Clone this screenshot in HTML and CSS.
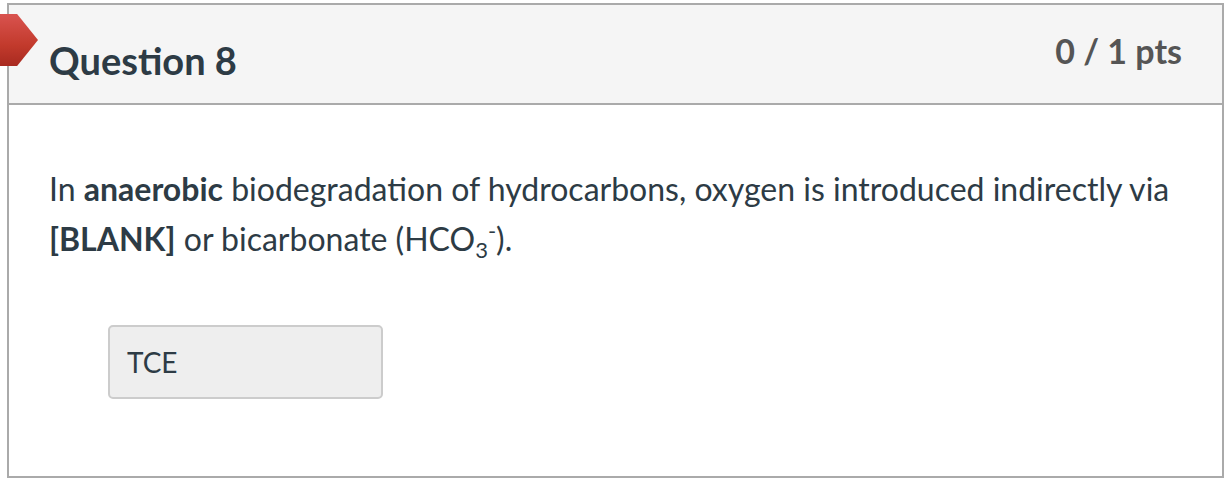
FILE: index.html
```html
<!DOCTYPE html>
<html>
<head>
<meta charset="utf-8">
<link rel="stylesheet" href="styles.css">
</head>
<body>
<div class="marker"></div>
<div class="question">
  <div class="header">
    <h2 class="title">Question 8</h2>
    <div class="pts">0 / 1 pts</div>
  </div>
  <div class="content">
    <p class="text">In <strong>anaerobic</strong> biodegradation of hydrocarbons, oxygen is introduced indirectly via <strong>[BLANK]</strong> or bicarbonate (HCO<sub>3</sub><sup>-</sup>).</p>
    <div class="answer">TCE</div>
  </div>
</div>
</body>
</html>
```
FILE: styles.css
```css
html, body {
  margin: 0;
  padding: 0;
  background: #ffffff;
}
body {
  font-family: Lato, "Noto Sans", sans-serif;
  color: #2d3b45;
  width: 1228px;
  height: 484px;
  overflow: hidden;
  position: relative;
}
.question {
  margin: 3px 4px 0 7px;
  height: 471px;
  border: 2px solid #aaaaaa;
  box-sizing: content-box;
}
.header {
  background: #f5f5f5;
  height: 98px;
  border-bottom: 2px solid #aaaaaa;
  display: flex;
  justify-content: space-between;
  align-items: flex-start;
  padding: 0 40px 0 40px;
}
.title {
  margin: 32px 0 0 0;
  font-size: 38px;
  font-weight: 700;
  line-height: 46px;
  color: #2d3b45;
}
.pts {
  margin-top: 26px;
  font-size: 34px;
  font-weight: 700;
  line-height: 40px;
  color: #555555;
}
.content {
  padding: 59px 40px 0 40px;
}
.text {
  margin: 0;
  font-size: 32px;
  line-height: 50px;
  color: #2d3b45;
}
.text strong {
  font-weight: 700;
}
.text sub, .text sup {
  font-size: 22px;
  line-height: 0;
}
.answer {
  margin: 61px 0 0 59px;
  width: 271px;
  height: 70px;
  border: 2px solid #cccccc;
  border-radius: 5px;
  background: #eeeeee;
  box-sizing: content-box;
  font-size: 28px;
  line-height: 70px;
  text-indent: 17px;
  color: #2d3b45;
}
.marker {
  position: absolute;
  left: 0;
  top: 14px;
  width: 38px;
  height: 52px;
  background: linear-gradient(180deg, #d9534f 0%, #c23a2c 60%, #a82a20 100%);
  clip-path: polygon(0 0, 45% 0, 100% 50%, 45% 100%, 0 100%);
  filter: drop-shadow(0 1px 1px rgba(0,0,0,0.4));
  z-index: 2;
}
```
